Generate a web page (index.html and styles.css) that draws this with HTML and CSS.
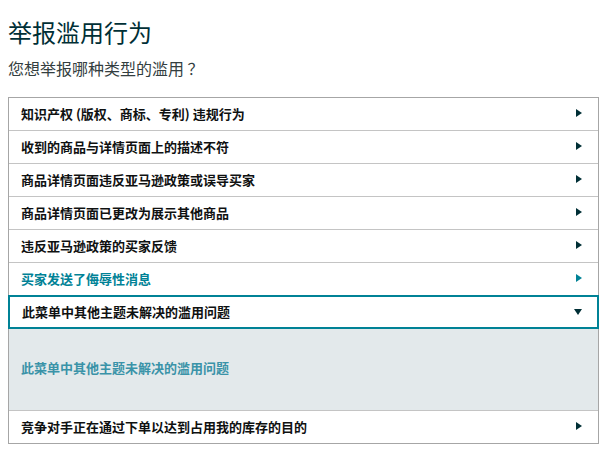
FILE: index.html
```html
<!DOCTYPE html>
<html lang="zh-CN">
<head>
<meta charset="utf-8">
<title>举报滥用行为</title>
<link rel="stylesheet" href="styles.css">
</head>
<body>
<h1 class="title">举报滥用行为</h1>
<p class="subtitle">您想举报哪种类型的滥用 ？</p>
<div class="list">
  <div class="row"><span class="label">知识产权 (版权、商标、专利) 违规行为</span><svg class="tri" width="6" height="8" viewBox="0 0 6 8"><polygon points="0,0 6,4 0,8"/></svg></div>
  <div class="row"><span class="label">收到的商品与详情页面上的描述不符</span><svg class="tri" width="6" height="8" viewBox="0 0 6 8"><polygon points="0,0 6,4 0,8"/></svg></div>
  <div class="row"><span class="label">商品详情页面违反亚马逊政策或误导买家</span><svg class="tri" width="6" height="8" viewBox="0 0 6 8"><polygon points="0,0 6,4 0,8"/></svg></div>
  <div class="row"><span class="label">商品详情页面已更改为展示其他商品</span><svg class="tri" width="6" height="8" viewBox="0 0 6 8"><polygon points="0,0 6,4 0,8"/></svg></div>
  <div class="row"><span class="label">违反亚马逊政策的买家反馈</span><svg class="tri" width="6" height="8" viewBox="0 0 6 8"><polygon points="0,0 6,4 0,8"/></svg></div>
  <div class="row row-hover row-flush"><span class="label">买家发送了侮辱性消息</span><svg class="tri" width="6" height="8" viewBox="0 0 6 8"><polygon points="0,0 6,4 0,8"/></svg></div>
  <div class="row row-open"><span class="label">此菜单中其他主题未解决的滥用问题</span><svg class="tri-down" width="8" height="6" viewBox="0 0 8 6"><polygon points="0,0 8,0 4,6"/></svg></div>
  <div class="panel"><span class="panel-text">此菜单中其他主题未解决的滥用问题</span></div>
  <div class="row row-last"><span class="label">竞争对手正在通过下单以达到占用我的库存的目的</span><svg class="tri" width="6" height="8" viewBox="0 0 6 8"><polygon points="0,0 6,4 0,8"/></svg></div>
</div>
</body>
</html>
```
FILE: styles.css
```css
html, body {
  background: #ffffff;
}
body {
  margin: 8px;
  font-family: "Noto Sans CJK SC", "Noto Sans", sans-serif;
  color: #0f1111;
}
.title {
  margin: 8px 0 0;
  font-size: 24px;
  line-height: 32px;
  font-weight: 400;
  color: #002f36;
}
.subtitle {
  margin: 8px 0 0;
  font-size: 16px;
  line-height: 24px;
  color: #333e40;
}
.list {
  margin-top: 17px;
  width: 591px;
  box-sizing: border-box;
  border: 1px solid #a6a6a6;
}
.row {
  display: flex;
  align-items: center;
  justify-content: space-between;
  height: 33px;
  box-sizing: border-box;
  padding: 0 16px 0 12px;
  border-bottom: 1px solid #c4c4c4;
  font-size: 13px;
  font-weight: 700;
  color: #0f1111;
}
.label {
  line-height: 18px;
}
.tri {
  fill: #002f36;
  margin-top: -2px;
}
.row-hover {
  color: #008296;
}
.row-hover .tri {
  fill: #008296;
}
.row-flush {
  border-bottom: 0;
  height: 32px;
}
.row-open {
  margin: 0 -1px;
  height: 34px;
  border: 2px solid #008296;
  padding: 0 15px 0 12px;
}
.tri-down {
  fill: #002f36;
}
.panel {
  display: flex;
  align-items: center;
  height: 82px;
  box-sizing: border-box;
  padding: 0 12px 3px;
  background: #e3e9eb;
  border-bottom: 1px solid #c4c4c4;
}
.panel-text {
  font-size: 13px;
  font-weight: 700;
  line-height: 18px;
  color: #3a93a8;
}
.row-last {
  border-bottom: 0;
  height: 32px;
}
```
